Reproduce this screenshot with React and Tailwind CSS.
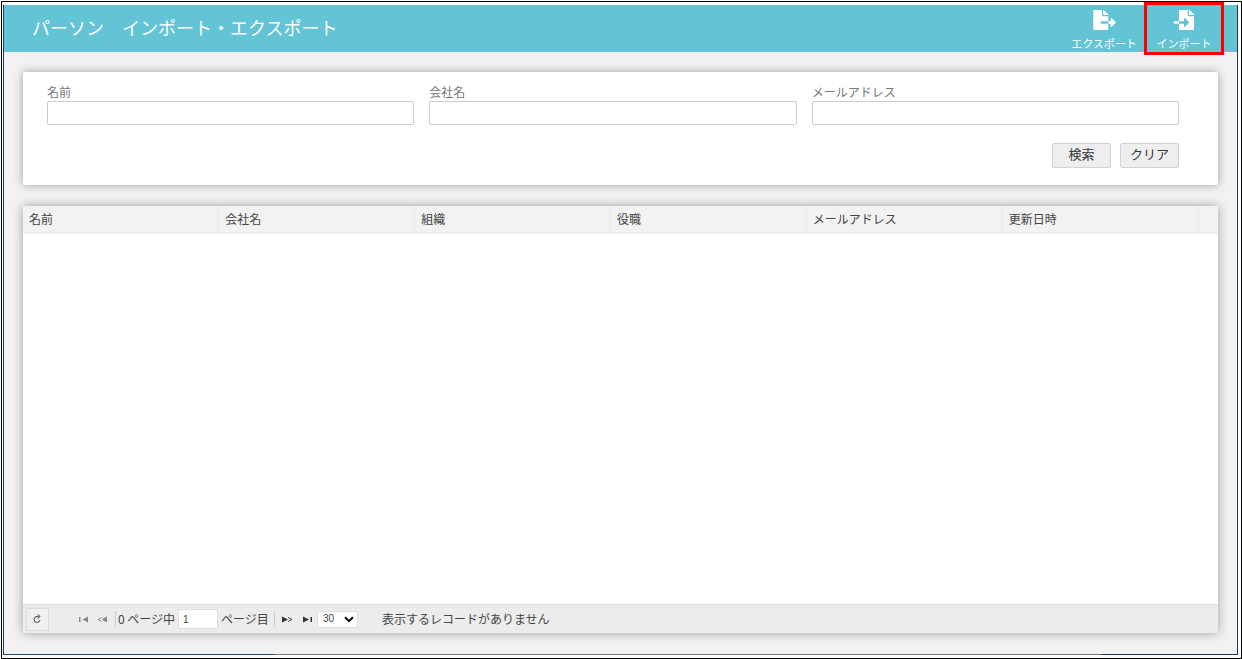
import React, { useState } from 'react';
import { FaFileExport, FaFileImport } from 'react-icons/fa';

const COLUMNS = ['名前', '会社名', '組織', '役職', 'メールアドレス', '更新日時'];

const FIELDS = [
    { id: 'name', label: '名前' },
    { id: 'company', label: '会社名' },
    { id: 'email', label: 'メールアドレス' },
];

const EMPTY = { name: '', company: '', email: '' };

const FirstIcon = () => (
    <svg width="10" height="8" viewBox="0 0 10 8" aria-hidden="true">
        <path fill="#888" d="M0 2h1.500v5H0zM9 1.500v6L3.500 4.500z" />
    </svg>
);

const PrevIcon = () => (
    <svg width="10" height="8" viewBox="0 0 10 8" aria-hidden="true">
        <path fill="none" stroke="#888" d="M4.500 2.500L1 4.500l3.500 2" />
        <path fill="#888" d="M10 1.500v6L4.500 4.500z" />
    </svg>
);

const NextIcon = () => (
    <svg width="11" height="8" viewBox="0 0 11 8" aria-hidden="true">
        <path fill="#333" d="M0 1.500v6l6-3z" />
        <path fill="none" stroke="#444" d="M6 2.500L10 4.500L6 6.500" />
    </svg>
);

const LastIcon = () => (
    <svg width="10" height="8" viewBox="0 0 10 8" aria-hidden="true">
        <path fill="#333" d="M0 1.500v6l6-3zM7.500 2H9v5H7.500z" />
    </svg>
);

const RefreshIcon = () => (
    <svg width="9" height="10" viewBox="0 0 9 10" aria-hidden="true">
        <path fill="none" stroke="#444" d="M5.500 2.500H4A3 3 0 1 0 7 6" />
        <path fill="none" stroke="#444" d="M4.500 0.500L7.200 2.500L4.500 4.500" />
    </svg>
);

const App = () => {
    const [form, setForm] = useState(EMPTY);
    const [page, setPage] = useState('1');
    const [pageSize, setPageSize] = useState('30');

    return (
        <div className="min-h-screen flex flex-col bg-white pt-px pl-px font-['Noto_Sans_CJK_JP',sans-serif] text-xs text-[#444]">
            <div className="flex-1 flex flex-col border border-black pt-[3px] pr-[3px] pb-[3px] pl-px">
                <div className="flex-1 flex flex-col border-x border-[#1f3a5f] bg-[#f2f2f2]">
                    {/* Header */}
                    <header className="h-[47px] flex items-center justify-between pl-7 pr-[13px] bg-[#62c4d4] text-white">
                        <h1 className="pb-1 text-lg">パーソン　インポート・エクスポート</h1>
                        <div className="self-stretch flex">
                            <button type="button" className="w-20 pt-[5px] flex flex-col items-center text-[11px] leading-4 gap-[5px]">
                                <FaFileExport className="w-[23px] h-5" />
                                エクスポート
                            </button>
                            <button type="button" className="relative w-20 pt-[5px] flex flex-col items-center text-[11px] leading-4 gap-[5px]">
                                <FaFileImport className="size-5" />
                                インポート
                                <span className="absolute -inset-y-[3px] inset-x-0 border-[3px] border-[#f00]" />
                            </button>
                        </div>
                    </header>

                    <main className="flex-1 flex flex-col gap-[21px] px-[19px] pt-5 pb-[21px]">
                        {/* Search form */}
                        <form
                            className="bg-white pl-6 pr-[39px] pt-[11px] pb-[17px] rounded-xs shadow-[0_0_10px_rgba(0,0,0,0.35)]"
                            onSubmit={(e) => e.preventDefault()}
                        >
                            <div className="grid grid-cols-3 gap-[15px]">
                                {FIELDS.map(({ id, label }) => (
                                    <div key={id} className="flex flex-col">
                                        <label htmlFor={id} className="pb-px leading-[17px] text-[#777]">{label}</label>
                                        <input
                                            id={id}
                                            type="text"
                                            className="h-6 px-2 border border-[#ccc] rounded-xs bg-white outline-none focus:border-[#62c4d4]"
                                            value={form[id]}
                                            onChange={(e) => setForm({ ...form, [id]: e.target.value })}
                                        />
                                    </div>
                                ))}
                            </div>
                            <div className="mt-[18px] flex justify-end gap-[9px] text-[13px] leading-5 text-[#333]">
                                <button type="submit" className="w-[59px] h-[25px] pb-[3px] border border-[#d2d2d2] rounded-xs bg-[#eee]">検索</button>
                                <button
                                    type="button"
                                    className="w-[59px] h-[25px] pb-[3px] border border-[#d2d2d2] rounded-xs bg-[#eee]"
                                    onClick={() => setForm(EMPTY)}
                                >
                                    クリア
                                </button>
                            </div>
                        </form>

                        {/* Results */}
                        <section className="flex-1 flex flex-col bg-white shadow-[0_0_10px_rgba(0,0,0,0.35)]">
                            <table className="w-full table-fixed text-left">
                                <thead className="bg-[#f2f2f2]">
                                    <tr className="h-7">
                                        {COLUMNS.map((col) => (
                                            <th key={col} className="px-1.5 pb-0.5 font-normal border-r border-[#eaeaea]">{col}</th>
                                        ))}
                                        <td className="w-5" />
                                    </tr>
                                </thead>
                            </table>

                            {/* Paging */}
                            <div className="mt-auto h-[29px] flex items-center pl-[3px] border-t border-[#ddd] bg-[#ececec]">
                                <button type="button" title="更新" className="size-[23px] flex items-center justify-center border border-[#ddd] bg-[#f0f0f0]">
                                    <RefreshIcon />
                                </button>
                                <div className="ml-[30px] flex items-center gap-2">
                                    <button type="button" title="最初のページ"><FirstIcon /></button>
                                    <button type="button" title="前のページ"><PrevIcon /></button>
                                </div>
                                <span className="ml-2 w-px h-4 bg-[#ccc]" />
                                <label htmlFor="page" className="ml-0.5">0 ページ中</label>
                                <input
                                    id="page"
                                    type="text"
                                    className="ml-[3px] w-10 h-5 px-1 border border-[#ddd] rounded-xs bg-white font-['Liberation_Sans',sans-serif] text-[10px] outline-none"
                                    value={page}
                                    onChange={(e) => setPage(e.target.value)}
                                />
                                <span className="ml-[3px]">ページ目</span>
                                <span className="ml-[5px] w-px h-4 bg-[#ccc]" />
                                <div className="ml-[7px] flex items-center gap-2.5">
                                    <button type="button" title="次のページ"><NextIcon /></button>
                                    <button type="button" title="最後のページ"><LastIcon /></button>
                                </div>
                                <div className="relative ml-1">
                                    <select
                                        aria-label="表示件数"
                                        className="block w-[41px] h-[17px] pl-[5px] appearance-none border border-[#ddd] rounded-xs bg-white font-['Liberation_Sans',sans-serif] text-[10px]"
                                        value={pageSize}
                                        onChange={(e) => setPageSize(e.target.value)}
                                    >
                                        <option>30</option>
                                        <option>50</option>
                                        <option>100</option>
                                    </select>
                                    <svg className="absolute right-1 top-[5px] pointer-events-none" width="10" height="7" viewBox="0 0 10 7" aria-hidden="true">
                                        <path fill="none" stroke="#111" strokeWidth="2" d="M1 1.200L5 5L9 1.200" />
                                    </svg>
                                </div>
                                <p className="ml-6">表示するレコードがありません</p>
                            </div>
                        </section>
                    </main>

                    <div className="flex h-px">
                        <span className="w-[22%] bg-[#1f4e79]" />
                        <span className="flex-1 bg-[#777]" />
                        <span className="w-[11%] bg-[#1f3864]" />
                    </div>
                </div>
            </div>
        </div>
    );
};

export default App;
